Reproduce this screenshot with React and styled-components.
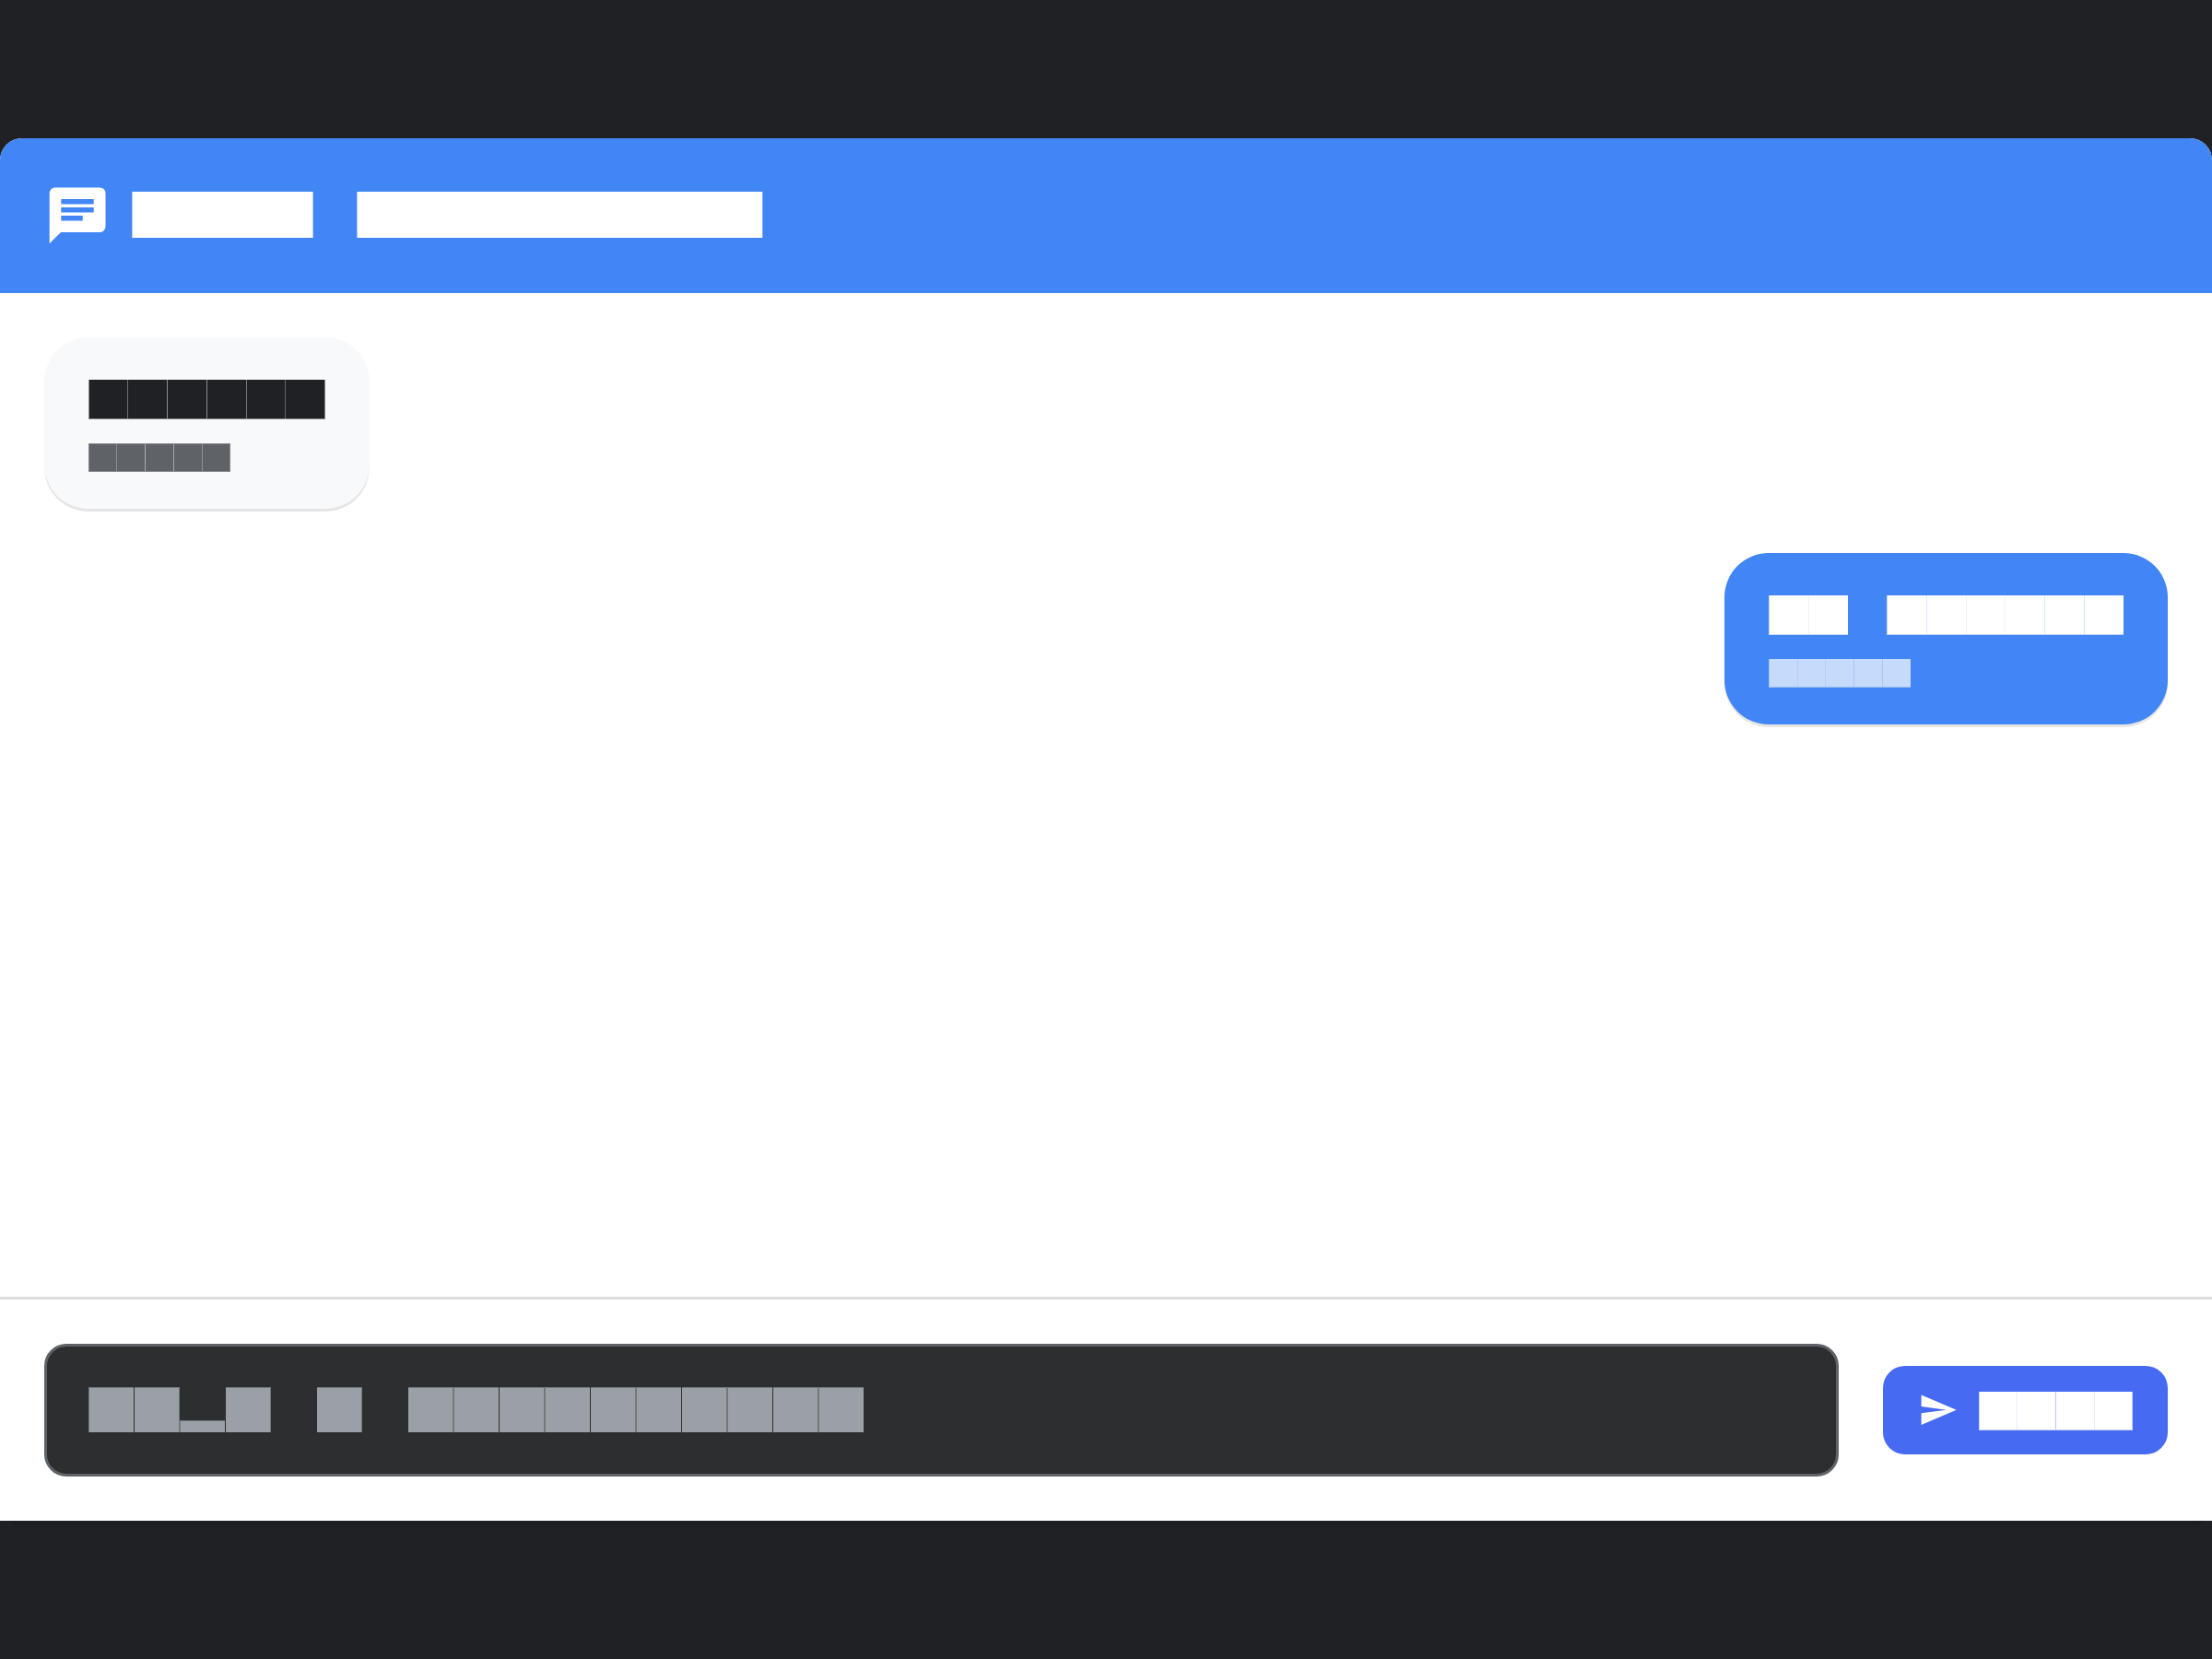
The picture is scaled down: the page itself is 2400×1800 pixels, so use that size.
import React from "react";
import styled, { createGlobalStyle } from "styled-components";

const GlobalStyle = createGlobalStyle`
  * { box-sizing: border-box; }
  html, body { margin: 0; padding: 0; background: #202124; }
  body { font-family: "Liberation Sans", Arial, sans-serif; }
`;

const Page = styled.main`
  width: 2400px;
  height: 1800px;
  padding: 150px 0;
  background: #202124;
  overflow: hidden;
`;

const Card = styled.section`
  display: flex;
  flex-direction: column;
  height: 1500px;
  border-radius: 24px;
  background: #fff;
  box-shadow: 0 6px 0 rgba(0, 0, 0, 0.1);
`;

const Header = styled.header`
  display: flex;
  align-items: center;
  height: 168px;
  padding: 0 53px;
  background: #4285f4;
  border-radius: 24px 24px 0 0;
`;

const ChatIcon = styled.svg`
  display: block;
  width: 62px;
  height: 62px;
  margin-right: 28px;
  fill: #fff;
`;

const Title = styled.div`
  display: flex;
  gap: 47px;
  margin-top: -2px;
`;

const TitleWord = styled.div`
  width: ${(p) => p.$w}px;
  height: 50px;
  background: #fff;
  border: 0 solid #b3cefb;
  border-left-width: 1px;
  border-right: 1px solid ${(p) => p.$end};
`;

const Messages = styled.div`
  flex: 1;
  display: flex;
  flex-direction: column;
  align-items: flex-start;
  gap: 48px;
  padding: 48px;
`;

const Bubble = styled.article`
  display: flex;
  flex-direction: column;
  align-items: flex-start;
  gap: 26px;
  height: 186px;
  padding: 46px 48px 0 ${(p) => (p.$own ? 47.6 : 48)}px;
  border-radius: 48px;
  align-self: ${(p) => (p.$own ? "flex-end" : "flex-start")};
  background: ${(p) => (p.$own ? "#4285f4" : "#f8f9fb")};
  box-shadow: 0 3px 0 rgba(0, 0, 0, 0.1);
`;

const Line = styled.div`
  display: flex;
  gap: 42px;
`;

const Word = styled.div`
  display: flex;
  height: ${(p) => p.$h}px;
  padding: ${(p) => p.$pad};
  background: ${(p) => p.$edge};
`;

const Cell = styled.div`
  box-sizing: content-box;
  width: ${(p) => p.$w}px;
  background: ${(p) => p.$color};
  border-right: ${(p) => (p.$seam ? `1px solid ${p.$seam}` : "0")};
`;

const Composer = styled.footer`
  display: flex;
  align-items: center;
  gap: 48px;
  height: 243px;
  padding: 0 48px;
  border-top: 3px solid #dadce0;
  background: #fff;
`;

const Field = styled.div`
  flex: 1;
  display: flex;
  align-items: flex-start;
  height: 144px;
  padding: 44px 45px;
  border: 3px solid #5f6368;
  border-radius: 24px;
  background: #2d2e30;
`;

const Hint = styled.div`
  display: flex;
  align-items: flex-end;
  gap: 50px;
`;

const HintWord = styled.div`
  display: flex;
  align-items: flex-end;
`;

const HintCell = styled.div`
  width: 49px;
  height: ${(p) => (p.$low ? 13 : 49)}px;
  margin-right: ${(p) => p.$gap || 0}px;
  background: #9aa0a6;
  border: solid #74787c;
  border-width: 1px ${(p) => p.$r || 0}px 0 ${(p) => p.$l || 0}px;
`;

const SendButton = styled.div`
  display: flex;
  align-items: center;
  width: 309px;
  height: 96px;
  padding-left: 37.7px;
  border-radius: 24px;
  background: #466af2;
`;

const SendIcon = styled.svg`
  display: block;
  width: 43.4px;
  height: 43.4px;
  margin-right: 22.9px;
  fill: #fff;
`;

const SendLabel = styled.div`
  margin-top: 2px;
`;

function Blocks({ widths, seams, color, edge, h, pad }) {
  return (
    <Word $h={h} $pad={pad} $edge={edge}>
      {widths.map((w, i) => (
        <Cell key={i} $w={w} $color={color} $seam={seams[i]} />
      ))}
    </Word>
  );
}

const hintRun = [0, 1, 2, 3, 4, 5, 6, 7, 8, 9];

export default function App() {
  return (
    <Page>
      <GlobalStyle />
      <Card>
        <Header>
          <ChatIcon viewBox="0 0 62 62">
            <path
              fillRule="evenodd"
              d="M6.7.4H55.5a6 6 0 0 1 6 6V43a6 6 0 0 1-6 6H13L.7 61.2V6.4a6 6 0 0 1 6-6zM13.3 13v5.4h35.4V13zM13.3 22v5.4h35.4V22zM13.3 31v5.4h23.4V31z"
            />
          </ChatIcon>
          <Title>
            <TitleWord $w={197} $end="#b3cefb" />
            <TitleWord $w={441} $end="#6ea1f6" />
          </Title>
        </Header>
        <Messages>
          <Bubble>
            <Blocks
              widths={[41, 42, 42, 42, 41, 42]}
              seams={["#6d6e71", "#8c8d90", "#8c8d90", "#77787b", "#66676a"]}
              color="#202124"
              edge="#86878a"
              h={43}
              pad="0 1px 1px"
            />
            <Blocks
              widths={[29, 30, 30, 30, 29]}
              seams={["#8c8f93", "#aaadb0", "#a5a8ab", "#8c8f93"]}
              color="#5f6368"
              edge="#84878c"
              h={31}
              pad="1px"
            />
          </Bubble>
          <Bubble $own>
            <Line>
              <Blocks
                widths={[42, 42]}
                seams={["#edf3fe"]}
                color="#fff"
                edge="#c9dcfc"
                h={43}
                pad="0 0 1px 1px"
              />
              <Blocks
                widths={[42, 42, 41, 42, 42, 42]}
                seams={["#dbe8fd", "#edf3fe", "#edf3fe", "#dbe8fd", "#d8e6fd"]}
                color="#fff"
                edge="#c0d6fb"
                h={43}
                pad="0 0 1px 1px"
              />
            </Line>
            <Blocks
              widths={[30, 29, 30, 30, 30]}
              seams={["#b4cefb", "#b4cefb", "#a7c6f9", "#a7c6f9"]}
              color="#c6dafc"
              edge="#a2c2f9"
              h={31}
              pad="0 0 1px 1px"
            />
          </Bubble>
        </Messages>
        <Composer>
          <Field>
            <Hint>
              <HintWord>
                <HintCell $l={1} $gap={1} />
                <HintCell $r={1} />
                <HintCell $l={1} $low $gap={1} />
                <HintCell $r={1} />
              </HintWord>
              <HintCell $r={1} />
              <HintWord>
                {hintRun.map((i) => (
                  <HintCell key={i} $l={i % 2} $r={1 - (i % 2)} $gap={i % 2} />
                ))}
              </HintWord>
            </Hint>
          </Field>
          <SendButton>
            <SendIcon viewBox="0 0 24 24">
              <path d="M2.01 21L23 12 2.01 3 2 10l15 2-15 2z" />
            </SendIcon>
            <SendLabel>
              <Blocks
                widths={[40, 41, 41, 40]}
                seams={["#e6eafe", "#bcc8fb", "#e6eafe"]}
                color="#fff"
                edge="#c8d2fb"
                h={42}
                pad="0 1px 1px"
              />
            </SendLabel>
          </SendButton>
        </Composer>
      </Card>
    </Page>
  );
}
